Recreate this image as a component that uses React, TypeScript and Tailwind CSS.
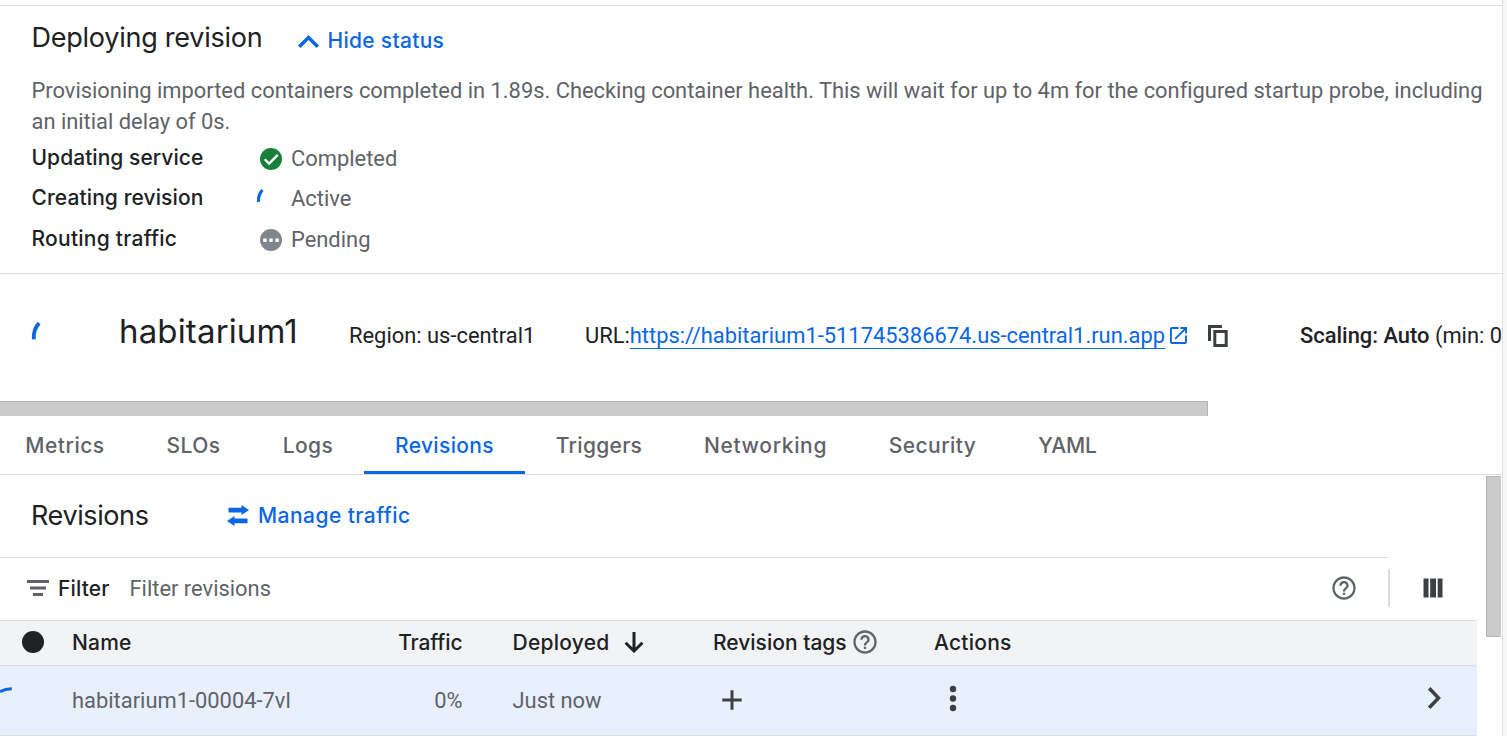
import type { ReactNode } from "react";

function Label({ className = "", children }: { className?: string; children: ReactNode }) {
  return (
    <span className={`font-['Inter',sans-serif] text-[21px] leading-none font-medium whitespace-nowrap ${className}`}>
      {children}
    </span>
  );
}

function HelpIcon() {
  return (
    <svg className="size-7 shrink-0" viewBox="0 0 24 24" fill="#5f6368">
      <path d="M11 18h2v-2h-2v2zm1-16C6.48 2 2 6.48 2 12s4.48 10 10 10 10-4.48 10-10S17.52 2 12 2zm0 18c-4.41 0-8-3.59-8-8s3.59-8 8-8 8 3.59 8 8-3.59 8-8 8zm0-14c-2.21 0-4 1.79-4 4h2c0-1.1.9-2 2-2s2 .9 2 2c0 2-3 1.75-3 5h2c0-2.25 3-2.5 3-5 0-2.21-1.79-4-4-4z" />
    </svg>
  );
}

function StatusRow({ label, tracking, icon, status }: { label: string; tracking: string; icon: ReactNode; status: string }) {
  return (
    <div className="flex h-10 items-center">
      <div className="flex w-[224.5px] shrink-0 pb-[3px]">
        <Label className={tracking}>{label}</Label>
      </div>
      <div className="w-[35px] shrink-0">{icon}</div>
      <span className="leading-none text-[#5f6368]">{status}</span>
    </div>
  );
}

const tabs = [
  { name: "Metrics", width: "w-[130px]", tracking: "tracking-[0.5px]" },
  { name: "SLOs", width: "w-[127px]", tracking: "tracking-[0.4px]" },
  { name: "Logs", width: "w-[102px]", tracking: "tracking-[0.4px]" },
  { name: "Revisions", width: "ml-[5px] w-[161px]", tracking: "tracking-[0.35px]", active: true },
  { name: "Triggers", width: "w-[148px]", tracking: "tracking-[0.3px]" },
  { name: "Networking", width: "w-[185px]", tracking: "tracking-[0.65px]" },
  { name: "Security", width: "w-[149px]", tracking: "tracking-[0.45px]" },
  { name: "YAML", width: "w-[121px]", tracking: "tracking-[-0.1px]" },
];

export default function App() {
  return (
    <div className="flex h-[736px] w-full overflow-hidden bg-white font-['Roboto',sans-serif] text-[21.9px] text-[#202124]">
      <main className="flex w-[1502px] shrink-0 flex-col overflow-hidden">
        <section className="mt-[5px] flex h-[269px] shrink-0 flex-col border-y border-[#dadce0] pl-[31.5px]">
          <div className="flex h-[69px] shrink-0 items-start">
            <div className="flex h-[62px] w-[266px] items-center">
              <Label className="text-[27px]! font-normal! tracking-[-0.25px]">Deploying revision</Label>
            </div>
            <div className="flex h-[69px] items-center text-[#0b66e4]">
              <svg className="mt-[2px] mr-[9px] h-[13px] w-[21px]" viewBox="6 8 12 7.41" fill="currentColor">
                <path d="M12 8l-6 6 1.41 1.41L12 10.83l4.59 4.58L18 14z" />
              </svg>
              <Label className="tracking-[0.3px]">Hide status</Label>
            </div>
          </div>
          <p className="h-[64px] w-[1460px] shrink-0 leading-[31px] tracking-[-0.008px] text-[#5f6368]">
            Provisioning imported containers completed in 1.89s. Checking container health. This will wait for up to 4m
            for the configured startup probe, including an initial delay of 0s.
          </p>
          <div className="flex flex-col">
            <StatusRow
              label="Updating service"
              tracking="tracking-[0.05px]"
              status="Completed"
              icon={
                <svg className="ml-[4px] size-[22px]" viewBox="2 2 20 20">
                  <circle cx="12" cy="12" r="10" fill="#188038" />
                  <path d="M6.3 12.2l4 4 7.8-7.9" fill="none" stroke="#fff" strokeWidth="2.1" />
                </svg>
              }
            />
            <StatusRow
              label="Creating revision"
              tracking="tracking-[0.1px]"
              status="Active"
              icon={
                <svg className="size-[22px]" viewBox="0 0 22 22">
                  <path d="M2.5 13.8C2.2 9.2 3.4 5.4 6.4 2" fill="none" stroke="#0b66e4" strokeWidth="3.2" />
                </svg>
              }
            />
            <div className="pt-px">
              <StatusRow
                label="Routing traffic"
                tracking="tracking-[0.25px]"
                status="Pending"
                icon={
                  <svg className="ml-[4px] size-[22px]" viewBox="0 0 22 22">
                    <circle cx="11" cy="11" r="11" fill="#80868b" />
                    <path d="M3.2 9.5h3.4v3.4H3.2zM9.3 9.5h3.4v3.4H9.3zM15.4 9.5h3.4v3.4h-3.4z" fill="#fff" />
                  </svg>
                }
              />
            </div>
          </div>
        </section>

        <section className="flex h-[127px] shrink-0 items-center pb-[4px] pl-[31px] whitespace-nowrap">
          <div className="w-[88px] shrink-0 pb-[9px]">
            <svg className="h-[20px] w-[12px]" viewBox="0 0 12 20">
              <path d="M2.8 18.3C2.4 11 4.2 6 8.2 2.2" fill="none" stroke="#0b66e4" strokeWidth="3.9" />
            </svg>
          </div>
          <div className="flex w-[230px] shrink-0 pb-[9px]">
            <Label className="text-[33px]! font-normal! tracking-[0.15px]">habitarium1</Label>
          </div>
          <span className="w-[236px] shrink-0 leading-none">Region: us-central1</span>
          <span className="leading-none">URL:</span>
          <a className="mt-px border-b border-[#0b66e4] leading-[24px] text-[#0b66e4]">
            https://habitarium1-511745386674.us-central1.run.app
          </a>
          <svg className="ml-[5px] size-[17px] shrink-0" viewBox="3 3 18 18" fill="#0b66e4">
            <path d="M19 19H5V5h7V3H5c-1.11 0-2 .9-2 2v14c0 1.1.89 2 2 2h14c1.1 0 2-.9 2-2v-7h-2v7zM14 3v2h3.59l-9.83 9.83 1.41 1.41L19 6.41V10h2V3h-7z" />
          </svg>
          <svg className="ml-[21px] h-[22px] w-[20px] shrink-0" viewBox="0 0 20 22" fill="none" stroke="#3c4043" strokeWidth="3">
            <path d="M1.5 16V1.5H14M6.8 6.5H18.2V20.4H6.8z" />
          </svg>
          <span className="ml-[72px] leading-none">
            <span className="font-medium">Scaling: Auto</span> (min: 0
          </span>
        </section>

        <div className="h-[15px] w-[1208px] shrink-0 border-t border-r border-[#b5b5b5] bg-[#cbcbcb]" />

        <nav className="flex h-[59px] shrink-0 border-b border-[#dadce0]">
          {tabs.map((t) => (
            <div
              key={t.name}
              className={`flex shrink-0 items-center justify-center ${t.width} ${
                t.active ? "border-b-[3px] border-[#0b66e4] pt-[3px] text-[#0b66e4]" : "text-[#5f6368]"
              }`}
            >
              <Label className={t.tracking}>{t.name}</Label>
            </div>
          ))}
        </nav>

        <div className="flex min-h-0 flex-1 justify-between">
          <div className="w-[1477px]">
            <div className="flex h-[83px] w-[1388px] items-center border-b border-[#dadce0] pb-[2px] pl-[31px]">
              <div className="flex w-[196px]">
                <Label className="text-[27px]! font-normal! tracking-[-0.4px]">Revisions</Label>
              </div>
              <svg className="mr-[9px] h-[21px] w-[22px]" viewBox="0 0 22 21" fill="#0b66e4">
                <path d="M1.5 2.7H14.5V0L22 5l-7.5 5V7.6H1.5zM20.5 13.4H7.5V11L0 16l7.5 5V18.3h13z" />
              </svg>
              <Label className="tracking-[0.45px] text-[#0b66e4]">Manage traffic</Label>
            </div>

            <div className="flex h-[62px] items-center pb-[2px] pl-[27px]">
              <svg className="mr-[9px] h-[16px] w-[22px]" viewBox="0 0 22 16" fill="#5f6368">
                <path d="M0 0h22v3H0zM3 6.5h16v3H3zM6 13h10v3H6z" />
              </svg>
              <div className="flex w-[71.5px] pt-px">
                <Label className="tracking-[0.15px]">Filter</Label>
              </div>
              <span className="w-[1200.5px] shrink-0 pt-px leading-none text-[#5f6368]">Filter revisions</span>
              <HelpIcon />
              <div className="ml-[30px] h-[38px] w-[2px] shrink-0 bg-[#dadce0]" />
              <svg className="ml-[33px] size-[20px] shrink-0" viewBox="0 0 20 20" fill="#3c4043">
                <path d="M.5.5h5v19h-5zM7.2.5h5.8v19H7.2zM14.7.5h4.8v19h-4.8z" />
              </svg>
            </div>

            <div className="flex h-[46px] items-center border-y border-[#dadce0] bg-[#f1f3f4] pb-[2px] pl-[22px]">
              <div className="w-[50px]">
                <div className="size-[22px] rounded-full bg-[#202124]" />
              </div>
              <div className="flex w-[199px]">
                <Label className="tracking-[0.2px]">Name</Label>
              </div>
              <div className="flex w-[191.5px] justify-end">
                <Label className="tracking-[-0.1px]">Traffic</Label>
              </div>
              <div className="flex w-[202.5px] items-center pl-[50px]">
                <Label className="tracking-[0.25px]">Deployed</Label>
                <svg className="ml-[14.5px] h-[21px] w-[20px] shrink-0" viewBox="0 0 20 21" fill="none" stroke="#202124" strokeWidth="3">
                  <path d="M10 0V18.6M1.6 10.8L10 19l8.4-8.2" />
                </svg>
              </div>
              <div className="flex w-[269px] items-center pl-[48px]">
                <Label>Revision tags</Label>
                <span className="ml-[4px]">
                  <HelpIcon />
                </span>
              </div>
              <Label className="tracking-[0.25px]">Actions</Label>
            </div>

            <div className="flex h-[70px] items-center border-b border-[#dadce0] bg-[#e8f0fe] text-[#5f6368]">
              <div className="w-[72px] pb-[22px]">
                <svg className="h-[6px] w-[12px]" viewBox="0 0 12 6">
                  <path d="M0 4.6C3.5 2.6 7.5 1.8 11.8 1.8" fill="none" stroke="#0b66e4" strokeWidth="3" />
                </svg>
              </div>
              <span className="w-[270px] leading-none">habitarium1-00004-7vl</span>
              <span className="w-[120.5px] text-right leading-none">0%</span>
              <span className="w-[259.5px] pl-[50px] leading-none">Just now</span>
              <svg className="mb-px h-[20px] w-[20px]" viewBox="0 0 20 20" fill="none" stroke="#3c4043" strokeWidth="3">
                <path d="M10 .3v19.4M.3 10h19.4" />
              </svg>
              <svg className="mb-[5px] ml-[207px] h-[27px] w-[8px]" viewBox="0 0 8 27" fill="#3c4043">
                <circle cx="4" cy="4" r="3.2" />
                <circle cx="4" cy="13.5" r="3.2" />
                <circle cx="4" cy="23" r="3.2" />
              </svg>
              <svg className="mb-[5px] ml-[469.5px] h-[22px] w-[14px]" viewBox="0 0 14 22" fill="none" stroke="#3c4043" strokeWidth="3.5">
                <path d="M2.2 1.3L11.5 11l-9.3 9.7" />
              </svg>
            </div>
          </div>
          <div className="mt-px mr-px h-[161px] w-[15px] border border-r-0 border-[#b5b5b5] bg-[#cbcbcb]" />
        </div>
      </main>
      <div className="flex-1 border-l border-[#e0e0e0] bg-[#f6f6f6]" />
    </div>
  );
}
